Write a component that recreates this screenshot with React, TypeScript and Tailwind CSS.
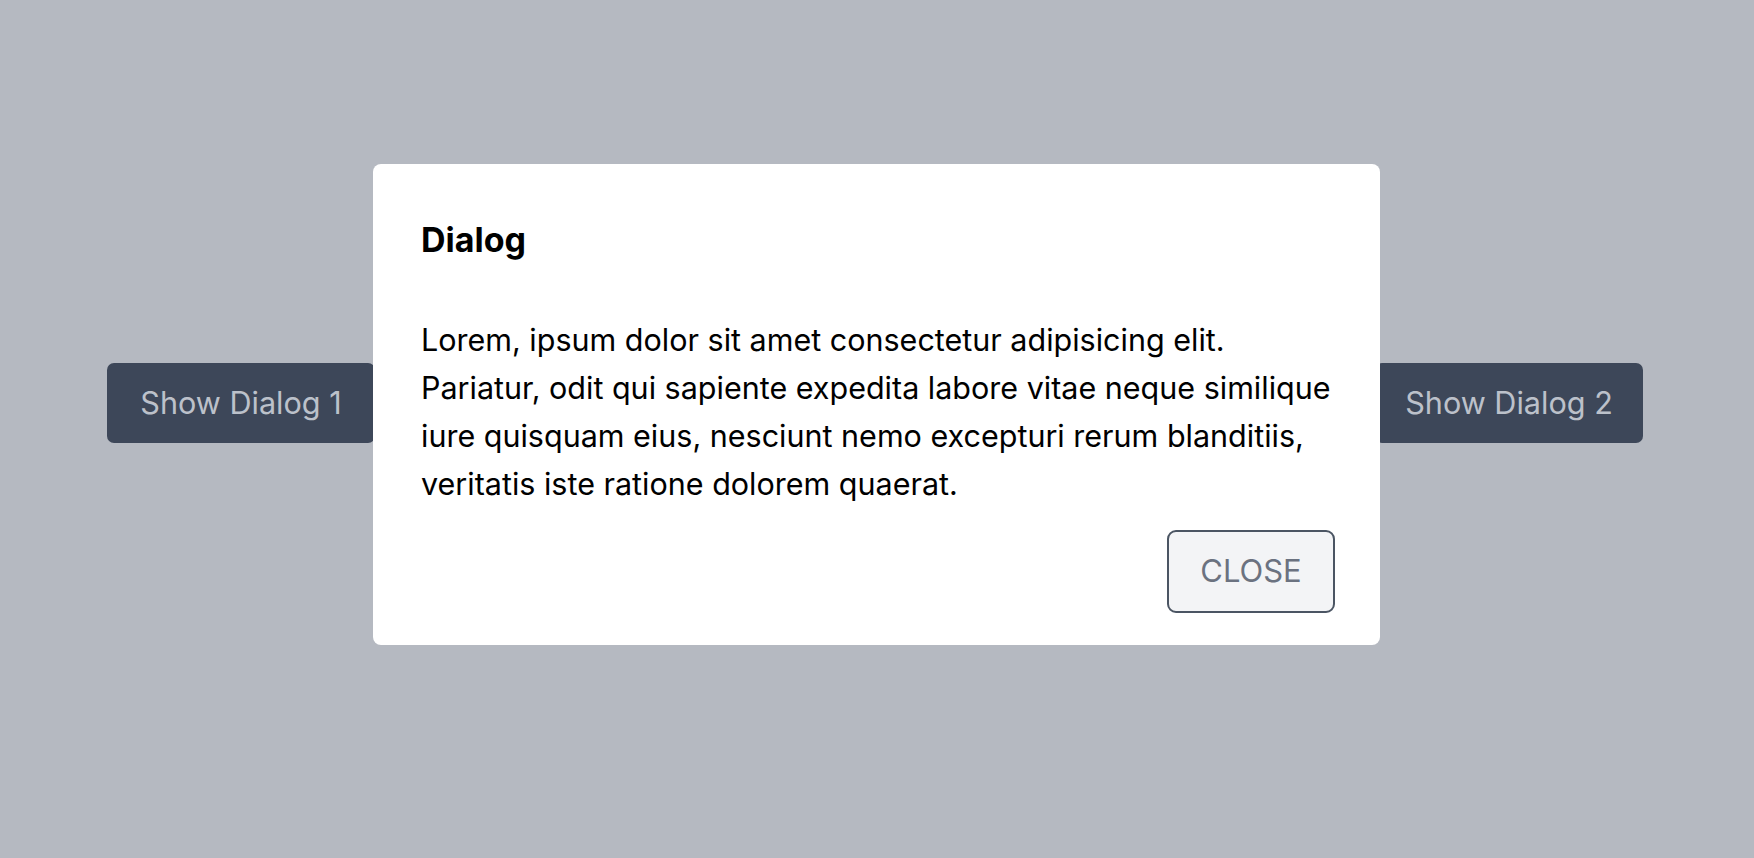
import React from "react";

export default function App() {
  return (
    <div
      className="relative h-screen w-full bg-[#b5b9c1] overflow-hidden"
      style={{ fontFamily: "Inter, 'Noto Sans', sans-serif" }}
    >
      <div className="flex h-full items-center justify-between pl-[107px] pr-[111px] pb-[52px]">
        <button className="h-[80px] w-[268px] rounded-[7px] bg-[#3d4759] text-[30.6px] text-[#bcc1ca]">
          Show Dialog 1
        </button>
        <button className="h-[80px] w-[268px] rounded-[7px] bg-[#3d4759] text-[30.6px] text-[#bcc1ca]">
          Show Dialog 2
        </button>
      </div>
      <div className="absolute inset-0 flex items-center justify-center pb-[50px] pr-[1px]">
        <div className="flex w-[1007px] flex-col rounded-[8px] bg-white px-12 pt-[50px] pb-[32px]">
          <h2 className="text-[34px] font-bold leading-[52px] text-black">Dialog</h2>
          <p className="mt-[50px] text-[30.5px] leading-[48px] text-black">
            Lorem, ipsum dolor sit amet consectetur adipisicing elit. Pariatur, odit qui sapiente expedita labore vitae neque similique iure quisquam eius, nesciunt nemo excepturi rerum blanditiis, veritatis iste ratione dolorem quaerat.
          </p>
          <div className="mt-[22px] -mr-[3px] flex justify-end">
            <button className="h-[83px] w-[168px] rounded-[9px] border-2 border-[#4b5563] bg-[#f3f4f6] text-[31px] text-[#6b7280]">
              CLOSE
            </button>
          </div>
        </div>
      </div>
    </div>
  );
}
